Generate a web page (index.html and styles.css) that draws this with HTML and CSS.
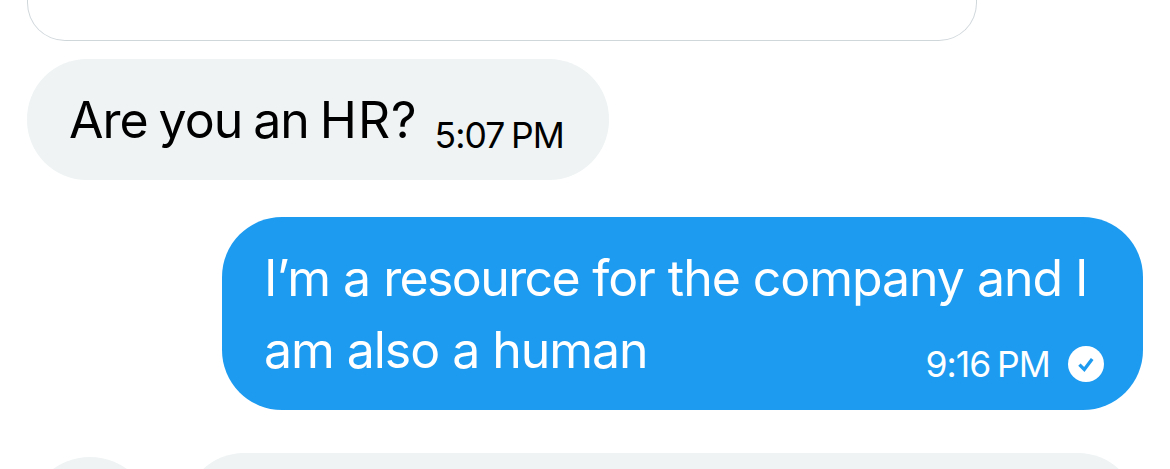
FILE: index.html
```html
<!DOCTYPE html>
<html lang="en">
    <head>
        <meta charset="UTF-8">
        <meta name="viewport" content="width=device-width, initial-scale=1.0">
        <title>Messages</title>
        <link rel="stylesheet" href="styles.css">
    </head>
    <body>
        <main class="chat">
            <div class="card"></div>
            <div class="bubble received">
                <span class="text">Are you an <span class="caps">HR?</span></span>
                <span class="time">5:07 PM</span>
            </div>
            <div class="bubble sent">
                <p class="text"><span class="line">I’m a <span class="tight">resource</span> for the company and I</span> <span class="line">am also a human</span></p>
                <div class="meta">
                    <span class="time">9:16 PM</span>
                    <svg class="check" viewBox="0 0 36 36">
                        <circle cx="18" cy="18" r="18" fill="#fff"/>
                        <path d="M11.4 18.6l4.9 4.8 7.9-10.4" fill="none" stroke="#1d9bf0" stroke-width="3.3"/>
                    </svg>
                </div>
            </div>
            <div class="next">
                <div class="avatar"></div>
                <div class="bubble preview"></div>
            </div>
        </main>
    </body>
</html>
```
FILE: styles.css
```css
* {
    box-sizing: border-box;
}

body {
    margin: 0;
    background: #fff;
    color: #0f1419;
    font-family: Inter, "Liberation Sans", sans-serif;
}

.chat {
    display: flex;
    flex-direction: column;
    height: 469px;
    padding: 0 27px;
    overflow: hidden;
}

.card {
    flex: none;
    width: 950px;
    height: 41px;
    border: 1px solid #d0d7db;
    border-top: 0;
    border-radius: 0 0 38px 38px;
}

.bubble {
    flex: none;
    border-radius: 60px;
}

.text {
    margin: 0;
    font-size: 50px;
    line-height: 72px;
    letter-spacing: -1.05px;
    white-space: nowrap;
}

.time {
    font-size: 35.5px;
    line-height: 40px;
    letter-spacing: -0.9px;
    word-spacing: -2.5px;
    white-space: nowrap;
}

.received {
    display: flex;
    align-items: flex-start;
    justify-content: space-between;
    width: 582px;
    height: 121px;
    margin-top: 18px;
    padding: 25px 45px 0 42px;
    background: #eff3f4;
    color: #000;
}

.received .text {
    letter-spacing: -1px;
    word-spacing: -2.1px;
}

.received .caps {
    letter-spacing: 0.9px;
}

.received .time {
    margin-top: 32px;
}

.sent {
    display: flex;
    align-items: flex-end;
    justify-content: space-between;
    width: 921px;
    height: 193px;
    margin: 37px 0 0 195px;
    padding: 0 39px 24px 42px;
    background: #1d9bf0;
    color: #fff;
}

.line {
    display: block;
}

.tight {
    letter-spacing: -1.6px;
}

.sent .text {
    width: 600px;
}

.meta {
    display: flex;
    align-items: center;
    gap: 18px;
    margin-bottom: 1px;
}

.sent .time {
    padding-top: 2px;
}

.check {
    width: 36px;
    height: 36px;
}

.next {
    display: flex;
    flex: none;
    margin-top: 43px;
}

.avatar {
    flex: none;
    width: 126px;
    height: 126px;
    margin-top: 4px;
    border-radius: 50%;
    background: #eff3f4;
}

.preview {
    width: 954px;
    height: 121px;
    margin-left: 31px;
    background: #eff3f4;
}
```
